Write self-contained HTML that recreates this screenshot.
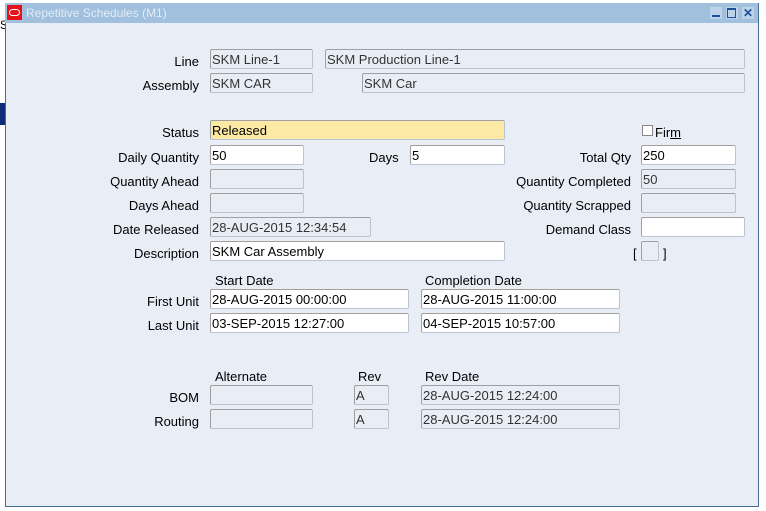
<!DOCTYPE html>
<html><head><style>
body{margin:0;width:766px;height:511px;background:#fff;position:relative;overflow:hidden;font-family:"Liberation Sans",sans-serif;font-size:13px;}
.win{position:absolute;left:5px;top:3px;width:752px;height:503px;background:#e9eef6;border:1px solid #4a6a9a;border-top:none;}
.tb{position:absolute;left:5px;top:3px;width:753px;height:20px;background:#a0c0de;}
.tb span{position:absolute;left:21px;top:3px;color:#e4ecf5;font-size:12px;}
.logo{position:absolute;left:7px;top:5px;width:15px;height:15px;background:#e8101a;}
.logo:after{content:"";position:absolute;left:2px;top:4px;width:9px;height:5px;border:1.5px solid #fff;border-radius:4px;}
.l{position:absolute;text-align:right;width:190px;left:9px;color:#000;}
.t{position:absolute;color:#000;}
.f{position:absolute;height:20px;box-sizing:border-box;border:1px solid #b8c4d4;border-top-color:#a0a0a0;border-left-color:#a0a0a0;background:#e9eef6;border-radius:2px;padding:2px 0 0 1px;color:#333;white-space:nowrap;}
.w{background:#fff;color:#000;}
.y{background:#fbe9a4;color:#000;}
.btn{position:absolute;top:7px;width:12px;height:12px;background:#bcd3ea;}
</style></head><body>
<div style="position:absolute;left:0;top:103px;width:5px;height:22px;background:#102a7a"></div>
<div style="position:absolute;left:0;top:18px;width:5px;height:16px;font-size:12px">S</div>
<div class="win"></div>
<div class="tb"><span>Repetitive Schedules (M1)</span></div>
<div class="logo"></div>
<div class="btn" style="left:710px"><div style="position:absolute;left:2px;top:8px;width:8px;height:2px;background:#1c4f9c"></div></div>
<div class="btn" style="left:726px"><div style="position:absolute;left:1px;top:1px;width:7px;height:7px;border:1.5px solid #1c4f9c;border-top-width:2.5px"></div></div>
<div class="btn" style="left:742px;color:#1c4f9c;font-weight:bold;font-size:12px;line-height:12px;text-align:center">✕</div>

<div class="l" style="top:54px">Line</div>
<div class="f" style="left:210px;top:49px;width:103px">SKM Line-1</div>
<div class="f" style="left:325px;top:49px;width:420px">SKM Production Line-1</div>
<div class="l" style="top:78px">Assembly</div>
<div class="f" style="left:210px;top:73px;width:103px">SKM CAR</div>
<div class="f" style="left:362px;top:73px;width:383px">SKM Car</div>

<div class="l" style="top:125px">Status</div>
<div class="f y" style="left:210px;top:120px;width:295px">Released</div>
<div class="l" style="top:150px">Daily Quantity</div>
<div class="f w" style="left:210px;top:145px;width:94px">50</div>
<div class="t" style="left:369px;top:150px">Days</div>
<div class="f w" style="left:410px;top:145px;width:95px">5</div>
<div class="l" style="top:174px">Quantity Ahead</div>
<div class="f" style="left:210px;top:169px;width:94px"></div>
<div class="l" style="top:198px">Days Ahead</div>
<div class="f" style="left:210px;top:193px;width:94px"></div>
<div class="l" style="top:222px">Date Released</div>
<div class="f" style="left:210px;top:217px;width:161px">28-AUG-2015 12:34:54</div>
<div class="l" style="top:246px">Description</div>
<div class="f w" style="left:210px;top:241px;width:295px">SKM Car Assembly</div>

<div style="position:absolute;left:642px;top:125px;width:9px;height:9px;border:1px solid #888;background:#fff"></div>
<div class="t" style="left:655px;top:125px">Fir<u>m</u></div>
<div class="l" style="left:441px;top:150px">Total Qty</div>
<div class="f w" style="left:641px;top:145px;width:95px">250</div>
<div class="l" style="left:441px;top:174px">Quantity Completed</div>
<div class="f" style="left:641px;top:169px;width:95px">50</div>
<div class="l" style="left:441px;top:198px">Quantity Scrapped</div>
<div class="f" style="left:641px;top:193px;width:95px"></div>
<div class="l" style="left:441px;top:222px">Demand Class</div>
<div class="f w" style="left:641px;top:217px;width:104px"></div>
<div class="t" style="left:633px;top:246px">[</div>
<div class="f" style="left:641px;top:241px;width:18px"></div>
<div class="t" style="left:663px;top:246px">]</div>

<div class="t" style="left:215px;top:273px">Start Date</div>
<div class="t" style="left:425px;top:273px">Completion Date</div>
<div class="l" style="top:294px">First Unit</div>
<div class="f w" style="left:210px;top:289px;width:199px">28-AUG-2015 00:00:00</div>
<div class="f w" style="left:421px;top:289px;width:199px">28-AUG-2015 11:00:00</div>
<div class="l" style="top:318px">Last Unit</div>
<div class="f w" style="left:210px;top:313px;width:199px">03-SEP-2015 12:27:00</div>
<div class="f w" style="left:421px;top:313px;width:199px">04-SEP-2015 10:57:00</div>

<div class="t" style="left:215px;top:369px">Alternate</div>
<div class="t" style="left:358px;top:369px">Rev</div>
<div class="t" style="left:425px;top:369px">Rev Date</div>
<div class="l" style="top:390px">BOM</div>
<div class="f" style="left:210px;top:385px;width:103px"></div>
<div class="f" style="left:354px;top:385px;width:35px">A</div>
<div class="f" style="left:421px;top:385px;width:199px">28-AUG-2015 12:24:00</div>
<div class="l" style="top:414px">Routing</div>
<div class="f" style="left:210px;top:409px;width:103px"></div>
<div class="f" style="left:354px;top:409px;width:35px">A</div>
<div class="f" style="left:421px;top:409px;width:199px">28-AUG-2015 12:24:00</div>
</body></html>
